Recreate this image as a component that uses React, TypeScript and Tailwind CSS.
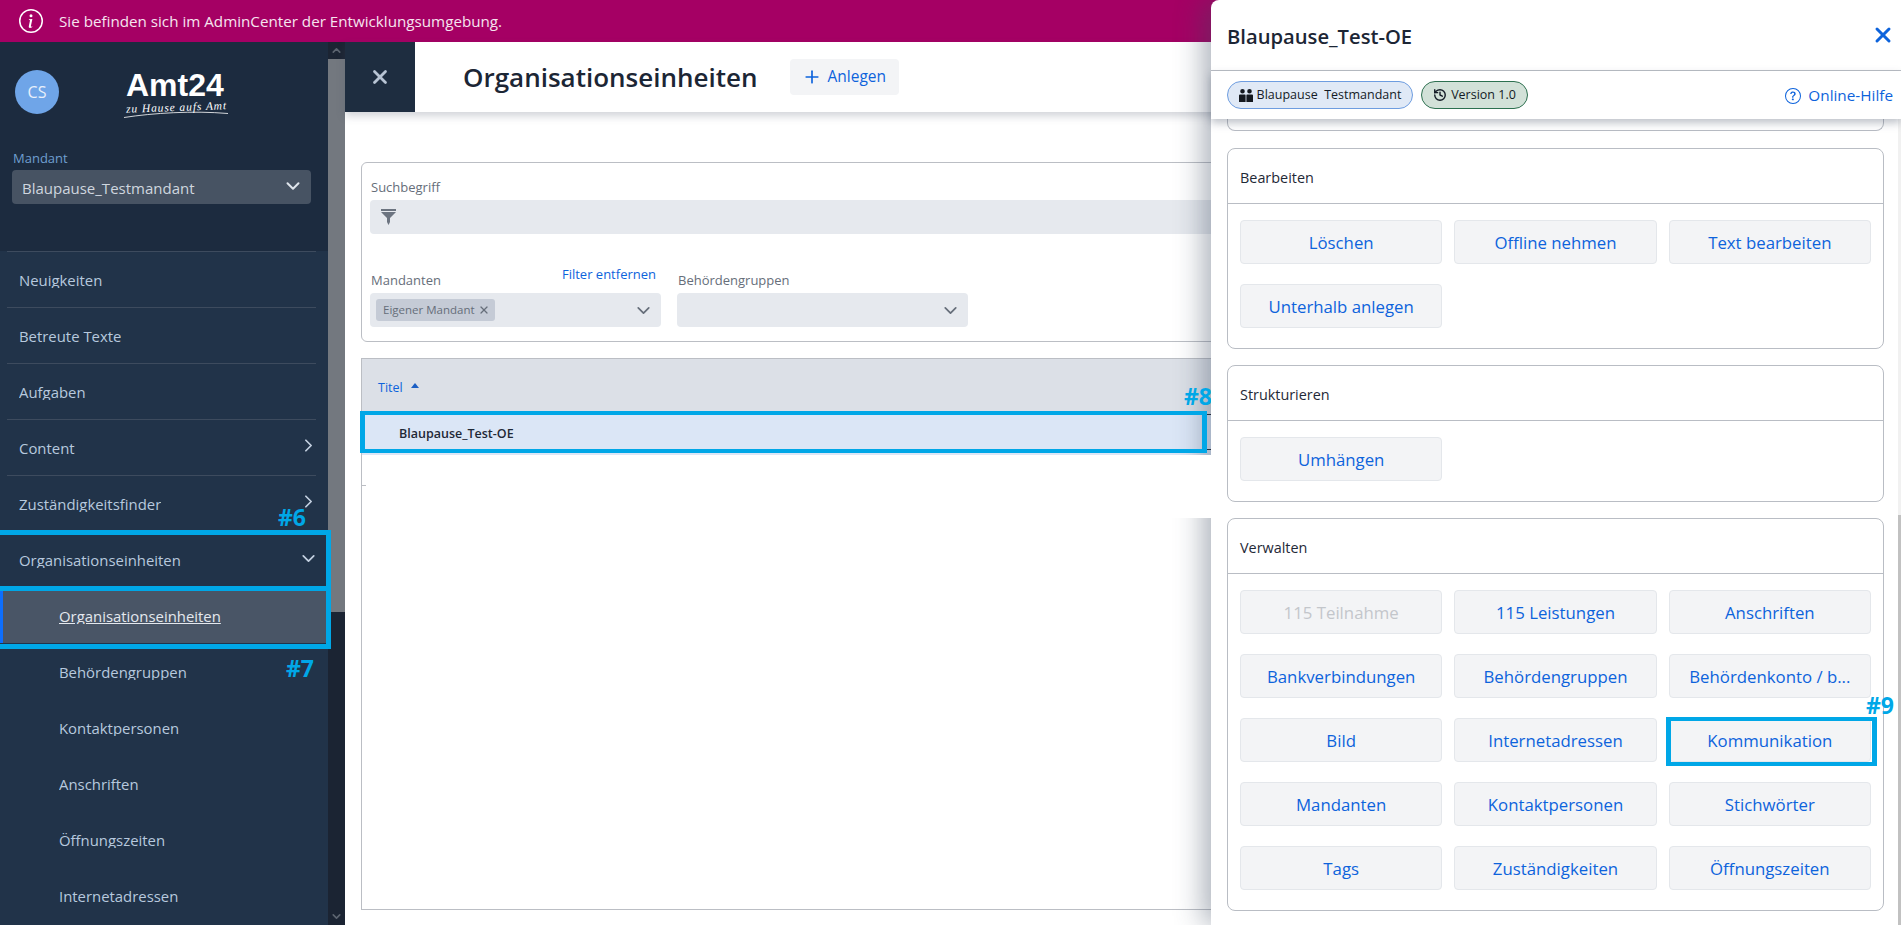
import { ChevronDown, ChevronRight, ChevronUp, History, Plus, X } from "lucide-react";
import { BsInfoCircle, BsQuestionCircle } from "react-icons/bs";

const navItems = [
  { label: "Neuigkeiten", divider: true },
  { label: "Betreute Texte", divider: true },
  { label: "Aufgaben", divider: true },
  { label: "Content", divider: true, icon: "right" },
  { label: "Zuständigkeitsfinder", divider: true, icon: "right" },
  { label: "Organisationseinheiten", icon: "down" },
  { label: "Organisationseinheiten", sub: true, active: true },
  { label: "Behördengruppen", sub: true },
  { label: "Kontaktpersonen", sub: true },
  { label: "Anschriften", sub: true },
  { label: "Öffnungszeiten", sub: true },
  { label: "Internetadressen", sub: true },
];

const verwalten = [
  "115 Teilnahme",
  "115 Leistungen",
  "Anschriften",
  "Bankverbindungen",
  "Behördengruppen",
  "Behördenkonto / b...",
  "Bild",
  "Internetadressen",
  "Kommunikation",
  "Mandanten",
  "Kontaktpersonen",
  "Stichwörter",
  "Tags",
  "Zuständigkeiten",
  "Öffnungszeiten",
];

function Logo() {
  return (
    <div className="relative w-[106px] h-[48px] text-white">
      <div className="font-['Liberation_Sans',sans-serif] font-bold text-[32px] leading-[28px] pl-[3px]">Amt24</div>
      <div className="mt-[2px] pl-[3px] -rotate-2 font-['Liberation_Serif',serif] italic text-[11.500px] leading-[12px] tracking-[0.9px] whitespace-nowrap">
        zu Hause aufs Amt
      </div>
      <svg className="absolute left-0 top-[36px]" width="106" height="12" viewBox="0 0 106 12" fill="none">
        <path d="M1 10.5C30 6 70 3.500 105 6.500" stroke="#fff" strokeWidth="0.8" />
      </svg>
    </div>
  );
}

function NavRow({ item }: { item: (typeof navItems)[number] }) {
  return (
    <div className={item.active ? "bg-[#495566] border-l-[3px] border-[#0d6efd] h-[56px]" : "h-[56px]"}>
      <div
        className={
          "h-full flex items-center justify-between " +
          (item.active ? "pl-[56px] pr-[14px]" : item.sub ? "ml-[7px] mr-[12px] pl-[52px] pr-[7px]" : "ml-[7px] mr-[12px] pl-[12px]") +
          (item.divider ? " border-t border-[#3d4b5e] pb-[2px]" : "")
        }
      >
        <span
          className={
            "block h-[18px] overflow-hidden leading-[20px] text-[14.900px] " +
            (item.active ? "text-[#e4e8ee] underline" : "text-[#b7c9de]")
          }
        >
          {item.label}
        </span>
        {item.icon === "right" && <ChevronRight size={21} strokeWidth={2} className="text-[#c3d0e0] -mr-[3px] -mt-[2px]" />}
        {item.icon === "down" && <ChevronDown size={21} strokeWidth={2} className="text-[#c3d0e0] -mr-[3px] -mt-[2px]" />}
      </div>
    </div>
  );
}

function Sidebar() {
  return (
    <aside className="w-[345px] flex shrink-0">
      <div className="w-[328px] flex flex-col bg-[#213349]">
        <div className="h-[209px] bg-[#1c2b3f] pt-[28px]">
          <div className="flex pl-[15px]">
            <div className="w-[44px] h-[44px] rounded-full bg-[#6fa5e8] text-[#e8f0fb] text-[16px] flex items-center justify-center">
              CS
            </div>
            <div className="ml-[64px] pt-[1px]">
              <Logo />
            </div>
          </div>
          <div className="pl-[13px] mt-[30px] text-[13px] leading-[18px] text-[#6f9fd0]">Mandant</div>
          <div className="mt-[3px] mx-[12px] w-[299px] h-[34px] rounded-[4px] bg-[#475363] flex items-center justify-between pl-[10px] pr-[7px]">
            <span className="text-[15px] text-[#cfd6df] pt-[2px]">Blaupause_Testmandant</span>
            <ChevronDown size={22} strokeWidth={2.2} className="text-[#dfe5ec] -mt-[2px]" />
          </div>
        </div>
        {navItems.map((item, i) => (
          <NavRow key={i} item={item} />
        ))}
      </div>
      <div className="w-[17px] bg-[#1b2433] flex flex-col">
        <div className="h-[17px] flex items-center justify-center">
          <ChevronUp size={13} strokeWidth={3} className="text-[#5c6470]" />
        </div>
        <div className="h-[553px] bg-[#73787f]" />
        <div className="flex-1" />
        <div className="h-[17px] flex items-center justify-center">
          <ChevronDown size={13} strokeWidth={3} className="text-[#5c6470]" />
        </div>
      </div>
    </aside>
  );
}

function FunnelIcon() {
  return (
    <svg width="15" height="16" viewBox="0 0 15 16" className="text-[#6c7480]">
      <path fill="currentColor" d="M0 0h15v2H0zM0 3h15L9 9v4l-1.500 3L6 13V9z" />
    </svg>
  );
}

function Filters() {
  return (
    <div className="h-[180px] rounded-[6px] border border-[#bbbec4] pl-[8px] text-[13px] text-[#666e7a]">
      <div className="pl-[1px] pt-[15px] leading-[19px] h-[37px]">Suchbegriff</div>
      <div className="h-[34px] rounded-[4px] bg-[#e6e9ee] flex items-center pl-[11px]">
        <FunnelIcon />
      </div>
      <div className="flex gap-[16px] mt-[38px]">
        <div className="w-[291px]">
          <div className="h-[21px] flex justify-between pr-[5px]">
            <span className="pl-[1px] -mt-[1px] leading-[19px]">Mandanten</span>
            <span className="-mt-[7px] leading-[19px] text-[#0d63dc]">Filter entfernen</span>
          </div>
          <div className="h-[34px] rounded-[4px] bg-[#e6e9ee] flex items-center justify-between pl-[6px] pr-[7px]">
            <div className="h-[22px] w-[119px] rounded-[3px] bg-[#c5cbd6] flex items-center justify-between pl-[7px] pr-[5px] text-[11.500px]">
              <span>Eigener Mandant</span>
              <X size={12} strokeWidth={2.4} />
            </div>
            <ChevronDown size={21} strokeWidth={2} />
          </div>
        </div>
        <div className="w-[291px]">
          <div className="h-[21px] pl-[1px] -mt-[1px] leading-[19px]">Behördengruppen</div>
          <div className="mt-[1px] h-[34px] rounded-[4px] bg-[#e6e9ee] flex items-center justify-end pr-[7px]">
            <ChevronDown size={21} strokeWidth={2} />
          </div>
        </div>
      </div>
    </div>
  );
}

function Table() {
  return (
    <div className="relative mt-[16px] h-[552px] border border-[#bbbec4] flex flex-col">
      <div className="h-[55px] bg-[#dce0e7] flex items-center pl-[16px] pt-[4px] text-[12.500px] text-[#0d63dc]">
        <span>Titel</span>
        <svg width="8" height="5" viewBox="0 0 8 5" className="ml-[8px] -mt-[6px]">
          <path fill="#1c5fc4" d="M4 0l4 5H0z" />
        </svg>
      </div>
      <div className="h-[41px] bg-[#dbe6f6]">
        <div className="h-[36px] border-y border-[#1f2937] flex items-center pl-[37px] pt-[4px] text-[12.500px] font-semibold text-[#1f2937]">
          Blaupause_Test-OE
        </div>
      </div>
      <div className="absolute left-0 top-[126px] w-[4px] h-px bg-[#bbbec4]" />
    </div>
  );
}

function Main() {
  return (
    <main className="flex-1 flex flex-col min-w-0">
      <header className="h-[70px] bg-white flex shadow-[0_4px_8px_rgba(70,80,100,0.25)] relative">
        <div className="w-[70px] bg-[#1e2d40] flex items-center justify-center">
          <X size={22} strokeWidth={3} className="text-[#b8c4d4]" />
        </div>
        <h1 className="ml-[48px] self-center text-[26px] font-semibold text-[#1c2635]">Organisationseinheiten</h1>
        <button className="ml-[32px] mt-[17px] w-[109px] h-[36px] rounded-[4px] bg-[#f3f4f6] flex items-center pl-[12px] gap-[6px] text-[15.500px] text-[#0d63dc]">
          <Plus size={20} strokeWidth={2} />
          Anlegen
        </button>
      </header>
      <div className="pl-[16px] pt-[50px] w-[1000px]">
        <Filters />
        <Table />
      </div>
    </main>
  );
}

function ActionSection({ title, items }: { title: string; items: string[] }) {
  return (
    <section className="rounded-[8px] border border-[#b9bdc4]">
      <div className="h-[55px] border-b border-[#b9bdc4] flex items-center pl-[12px] pt-[3px] text-[14.400px] text-[#1f2937]">
        {title}
      </div>
      <div className="grid grid-cols-3 gap-x-[12px] gap-y-[20px] px-[12px] pt-[16px] pb-[20px]">
        {items.map((label) => (
          <button
            key={label}
            className={
              "h-[44px] pt-[1px] rounded-[4px] border border-[#e4e7eb] bg-[#f3f4f6] text-[16.800px] whitespace-nowrap " +
              (label === "115 Teilnahme" ? "text-[#c3c6cb]" : "text-[#0d63dc]")
            }
          >
            {label}
          </button>
        ))}
      </div>
    </section>
  );
}

function PeopleIcon() {
  return (
    <svg width="14" height="13" viewBox="0 0 14 13" className="text-[#14181f]">
      <path
        fill="currentColor"
        d="M3.500 0a2.300 2.300 0 110 4.600 2.300 2.300 0 010-4.600zM10.500 0a2.300 2.300 0 110 4.600 2.300 2.300 0 010-4.600zM0 6.500Q0 5.500 1 5.500h5Q6.600 5.500 6.600 6.500V13H0zM7.400 6.500Q7.400 5.500 8 5.500h5q1 0 1 1V13H7.400z"
      />
    </svg>
  );
}

function ActionPanel() {
  return (
    <div className="absolute z-20 left-[1211px] top-0 w-[690px] h-full bg-white rounded-tl-[8px] flex flex-col shadow-[-8px_0_28px_rgba(60,75,95,0.42)]">
      <div className="h-[71px] shrink-0 border-b border-[#b9bdc4] flex items-center justify-between pl-[16px] pr-[6px]">
        <h2 className="text-[20.200px] font-semibold text-[#1c2635] pt-[2px]">Blaupause_Test-OE</h2>
        <X size={24} strokeWidth={3} className="text-[#0d63dc]" />
      </div>
      <div className="h-[48px] shrink-0 relative z-10 bg-white shadow-[0_4px_8px_rgba(70,80,100,0.35)] flex items-center pl-[16px] pr-[8px] text-[12.500px] text-[#141b26]">
        <div className="h-[28px] w-[186px] rounded-full border border-[#6e9de0] bg-[#e0e9f6] flex items-center justify-center gap-[4px]">
          <PeopleIcon />
          <span className="whitespace-pre">Blaupause  Testmandant</span>
        </div>
        <div className="ml-[8px] h-[28px] w-[107px] rounded-full border border-[#2d7050] bg-[#d2e1d8] flex items-center justify-center gap-[4px]">
          <History size={14} strokeWidth={2.4} />
          Version 1.0
        </div>
        <div className="ml-auto flex items-center gap-[7px] text-[15.300px] text-[#0d63dc] pt-[1px]">
          <BsQuestionCircle size={16} />
          Online-Hilfe
        </div>
      </div>
      <div className="flex-1 flex overflow-hidden">
        <div className="w-[657px] ml-[16px] flex flex-col">
          <div className="h-[12px] shrink-0 rounded-b-[8px] border-x border-b border-[#b9bdc4]" />
          <div className="mt-[17px]">
            <ActionSection title="Bearbeiten" items={["Löschen", "Offline nehmen", "Text bearbeiten", "Unterhalb anlegen"]} />
          </div>
          <div className="mt-[16px]">
            <ActionSection title="Strukturieren" items={["Umhängen"]} />
          </div>
          <div className="mt-[16px]">
            <ActionSection title="Verwalten" items={verwalten} />
          </div>
        </div>
        <div className="ml-auto w-[3px] bg-[#f1f1f1] pt-[396px]">
          <div className="h-full bg-[#c1c1c1]" />
        </div>
      </div>
    </div>
  );
}

function Annotations() {
  const label = "absolute z-30 font-bold text-[23px] leading-[24px] text-[#00a7e7]";
  const box = "absolute z-30 border-solid border-[#00a7e7] pointer-events-none";
  return (
    <>
      <div className={box + " left-0 top-[530px] w-[331px] h-[61px] border-y-[5px] border-r-[5px]"} />
      <div className={box + " left-0 top-[586px] w-[331px] h-[63px] border-y-[5px] border-r-[5px]"} />
      <div className={box + " left-[360px] top-[411px] w-[847px] h-[42px] border-y-[4px] border-x-[5px]"} />
      <div className={box + " left-[1666px] top-[717px] w-[211px] h-[49px] border-y-[4px] border-x-[5px]"} />
      <div className={label + " left-[278px] top-[505px]"}>#6</div>
      <div className={label + " left-[286px] top-[656px]"}>#7</div>
      <div className={label + " left-[1184px] top-[384px] w-[27px] overflow-hidden"}>#8</div>
      <div className={label + " left-[1866px] top-[693px]"}>#9</div>
      {/* the white strip next to the panel, part of the picture */}
      <div className="absolute z-[25] left-[1130px] top-[455px] w-[81px] h-[63px] bg-white" />
    </>
  );
}

export default function App() {
  return (
    <div className="relative w-[1901px] h-[925px] overflow-hidden bg-white flex flex-col font-['Open_Sans',sans-serif]">
      <div className="h-[42px] shrink-0 bg-[#a50064] flex items-center pl-[19px] gap-[16px] text-[15.200px] text-[#f6e4ef]">
        <BsInfoCircle size={24} className="text-white" />
        Sie befinden sich im AdminCenter der Entwicklungsumgebung.
      </div>
      <div className="flex-1 flex min-h-0">
        <Sidebar />
        <Main />
      </div>
      <ActionPanel />
      <Annotations />
    </div>
  );
}
